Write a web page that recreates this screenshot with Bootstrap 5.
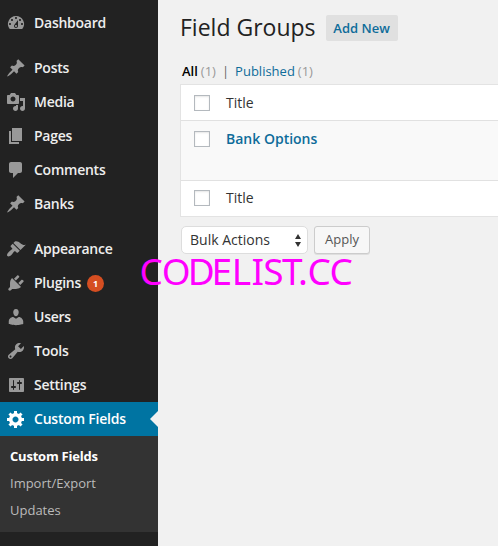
<!DOCTYPE html>
<html lang="en">
<head>
<meta charset="utf-8">
<meta name="viewport" content="width=device-width, initial-scale=1">
<title>Field Groups</title>
<link href="https://cdn.jsdelivr.net/npm/bootstrap@5.3.0/dist/css/bootstrap.min.css" rel="stylesheet">
<style>
body{font-family:"Open Sans",sans-serif;font-size:13px;line-height:18px;background:#f1f1f1;color:#333;height:546px}
a{text-decoration:none;color:#0e6c9a}
.side-menu{width:158px;background:#222;padding-top:6px}
.side-menu .nav-link{height:34px;padding:0 0 0 6px;gap:8px;color:#eee;font-size:14px;font-weight:600;letter-spacing:-.25px}
.side-menu svg{width:20px;height:20px;fill:#999;flex:none}
.menu-gap{margin-top:11px}
.side-menu .nav-link.active{background:#0074a2;color:#fff;letter-spacing:-.2px}
.nav-link.active svg{fill:#fff}
.nav-link.active::after{content:"";margin-left:auto;border:8px solid transparent;border-right-color:#f1f1f1;border-left:0}
.count-dot{width:17px;height:17px;background:#d54e21;font-size:9px;margin-left:-2px}
.sub-menu{background:#333;height:96px;padding:7px 10px}
.sub-menu a{height:27px;line-height:27px;color:#bbb}
.sub-menu a.current{color:#fff;font-weight:700;letter-spacing:-.22px}
.main-area{padding:11px 0 0 22px}
.page-title{font-size:23px;line-height:32px;font-weight:400;color:#222}
.add-new{height:26px;width:72px;background:#e0e0e0;border-radius:2px;font-weight:600;line-height:26px;margin-left:10px;margin-top:4px}
.views{margin:19px 0 0 2px;gap:3px;height:22px}
.views span{color:#999}
.views .sep{color:#666;margin:0 3px}
.groups{border:1px solid #e3e3e3;border-right:0;background:#fff;font-size:14px}
.g-row{height:35px;padding-left:13px;gap:16px}
.g-row.item{height:61px;background:#f9f9f9;border-top:1px solid #e1e1e1;border-bottom:1px solid #e1e1e1;padding-top:10px}
.g-row.foot{padding-bottom:2px}
.item a{margin-top:-1px}
.tick{appearance:none;width:16px;height:16px;margin:0;border:1px solid #b4b9be;background:#fff;box-shadow:inset 0 1px 2px rgba(0,0,0,.1)}
.action-bar{padding-top:9px;gap:6px}
.bulk{width:127px;height:28px;margin-left:1px;border:1px solid #ddd;border-radius:5px;background:#fff;font-size:14px;padding:0 6px 0 8px}
.apply{width:56px;height:28px;padding:0;border:1px solid #ccc;border-radius:3px;background:#f7f7f7;color:#555;font-size:13px;box-shadow:0 1px 0 rgba(0,0,0,.08)}
.stamp{left:138px;top:250px;font:37px "Noto Sans",sans-serif;fill:#f0f}
</style>
<script src="https://cdn.jsdelivr.net/npm/bootstrap@5.3.0/dist/js/bootstrap.bundle.min.js"></script>
</head>
<body class="d-flex position-relative overflow-hidden">
<svg class="d-none">
<symbol id="pin" viewBox="0 0 20 20"><path d="M10.44 3.02l1.82-1.82 6.36 6.35-1.83 1.82c-1.05-.68-2.48-.57-3.41.36l-.75.75c-.92.93-1.04 2.35-.35 3.41l-1.83 1.82-2.41-2.41-2.8 2.79c-.42.42-3.38 2.71-3.8 2.29s1.86-3.39 2.28-3.81l2.79-2.79L4.1 9.36l1.83-1.82c1.05.69 2.48.57 3.4-.36l.75-.75c.93-.92 1.05-2.35.36-3.41z"/></symbol>
</svg>
<aside class="side-menu flex-shrink-0">
<nav class="nav flex-column flex-nowrap">
<a href="#" class="nav-link d-flex align-items-center"><svg viewBox="0 0 20 20"><path d="M3.76 16h12.48A7.998 7.998 0 0 0 10 3a7.998 7.998 0 0 0-6.24 13zM10 4c.55 0 1 .45 1 1s-.45 1-1 1-1-.45-1-1 .45-1 1-1zM6 6c.55 0 1 .45 1 1s-.45 1-1 1-1-.45-1-1 .45-1 1-1zm8 0c.55 0 1 .45 1 1s-.45 1-1 1-1-.45-1-1 .45-1 1-1zm-5.37 5.55L12 7v6c0 1.1-.9 2-2 2s-2-.9-2-2c0-.57.24-1.08.63-1.45zM4 10c.55 0 1 .45 1 1s-.45 1-1 1-1-.45-1-1 .45-1 1-1zm12 0c.55 0 1 .45 1 1s-.45 1-1 1-1-.45-1-1 .45-1 1-1zm-5 3c0-.55-.45-1-1-1s-1 .45-1 1 .45 1 1 1 1-.45 1-1z"/></svg>Dashboard</a>
<a href="#" class="nav-link d-flex align-items-center menu-gap"><svg><use href="#pin"/></svg>Posts</a>
<a href="#" class="nav-link d-flex align-items-center"><svg viewBox="0 0 20 20"><path d="M13 11V4c0-.55-.45-1-1-1h-1.67L9 1H5L3.67 3H2c-.55 0-1 .45-1 1v7c0 .55.45 1 1 1h10c.55 0 1-.45 1-1zM7 4.5c1.38 0 2.5 1.12 2.5 2.5S8.38 9.5 7 9.5 4.5 8.38 4.5 7 5.62 4.5 7 4.5zM14 6h5v10.5c0 1.38-1.12 2.5-2.5 2.5S14 17.88 14 16.5s1.12-2.5 2.5-2.5c.17 0 .34.02.5.05V9h-3V6zm-4 8.05V13h2v3.5c0 1.38-1.12 2.5-2.5 2.5S7 17.88 7 16.5 8.12 14 9.5 14c.17 0 .34.02.5.05z"/></svg>Media</a>
<a href="#" class="nav-link d-flex align-items-center"><svg viewBox="0 0 20 20"><path d="M6 15V2h10v13H6zm-1 1h8v2H3V5h2v11z"/></svg>Pages</a>
<a href="#" class="nav-link d-flex align-items-center"><svg viewBox="0 0 20 20"><path d="M5 2h9c1.1 0 2 .9 2 2v7c0 1.1-.9 2-2 2h-2l-5 5v-5H5c-1.1 0-2-.9-2-2V4c0-1.1.9-2 2-2z"/></svg>Comments</a>
<a href="#" class="nav-link d-flex align-items-center"><svg><use href="#pin"/></svg>Banks</a>
<a href="#" class="nav-link d-flex align-items-center menu-gap"><svg viewBox="0 0 20 20"><path d="M14.48 11.06L7.41 3.99l1.5-1.5c.5-.56 2.3-.47 3.51.32 1.21.8 1.43 1.28 2.91 2.1 1.18.64 2.45 1.26 4.45.85zm-.71.71L6.7 4.7 4.93 6.47c-.39.39-.39 1.02 0 1.41l1.06 1.06c.39.39.39 1.03 0 1.42-.6.6-1.43 1.11-2.21 1.69-.35.26-.7.53-1.01.84C1.43 14.23.4 16.08 1.4 17.07c.99 1 2.84-.03 4.18-1.36.31-.31.58-.66.85-1.02.57-.78 1.08-1.61 1.69-2.21.39-.39 1.02-.39 1.41 0l1.06 1.06c.39.39 1.02.39 1.41 0z"/></svg>Appearance</a>
<a href="#" class="nav-link d-flex align-items-center"><svg viewBox="0 0 20 20"><path d="M13.11 4.36L9.87 7.6 8 5.73l3.24-3.24c.35-.34 1.05-.2 1.56.32.52.51.66 1.21.31 1.55zm-8 1.77l.91-1.12 9.01 9.01-1.19.84c-.71.71-2.63 1.16-3.82 1.16H6.14L4.9 17.26c-.59.59-1.54.59-2.12 0-.59-.58-.59-1.53 0-2.12l1.24-1.24v-3.88c0-1.13.4-3.19 1.09-3.89zm7.26 3.97l3.24-3.24c.34-.35 1.04-.21 1.55.31.52.51.66 1.21.31 1.55l-3.24 3.25z"/></svg>Plugins<span class="count-dot badge rounded-circle d-flex align-items-center justify-content-center p-0">1</span></a>
<a href="#" class="nav-link d-flex align-items-center"><svg viewBox="0 0 20 20"><path d="M10 9.25c-2.27 0-2.73-3.44-2.73-3.44C7 4.02 7.82 2 9.97 2c2.16 0 2.98 2.02 2.71 3.81 0 0-.41 3.44-2.68 3.44zm0 2.57L12.72 10c2.39 0 4.52 2.33 4.52 4.53v2.49s-3.65 1.13-7.24 1.13c-3.65 0-7.24-1.13-7.24-1.13v-2.49c0-2.25 1.94-4.48 4.47-4.48z"/></svg>Users</a>
<a href="#" class="nav-link d-flex align-items-center"><svg viewBox="0 0 20 20"><path d="M16.68 9.77c-1.34 1.34-3.3 1.67-4.95.99l-5.41 6.52c-.99.99-2.59.99-3.58 0s-.99-2.59 0-3.57l6.52-5.42c-.68-1.65-.35-3.61.99-4.95 1.28-1.28 3.12-1.62 4.72-1.06l-2.89 2.89 2.82 2.82 2.86-2.87c.53 1.58.18 3.39-1.08 4.65zM3.81 16.21c.4.39 1.04.39 1.43 0 .4-.4.4-1.04 0-1.43-.39-.4-1.03-.4-1.43 0-.39.39-.39 1.03 0 1.43z"/></svg>Tools</a>
<a href="#" class="nav-link d-flex align-items-center"><svg viewBox="0 0 20 20"><path d="M18 16V4c0-.55-.45-1-1-1H4c-.55 0-1 .45-1 1v12c0 .55.45 1 1 1h13c.55 0 1-.45 1-1zM8 11h1c.55 0 1 .45 1 1s-.45 1-1 1H8v1.5c0 .28-.22.5-.5.5s-.5-.22-.5-.5V13H6c-.55 0-1-.45-1-1s.45-1 1-1h1V5.5c0-.28.22-.5.5-.5s.5.22.5.5V11zm5-2h-1c-.55 0-1-.45-1-1s.45-1 1-1h1V5.5c0-.28.22-.5.5-.5s.5.22.5.5V7h1c.55 0 1 .45 1 1s-.45 1-1 1h-1v5.5c0 .28-.22.5-.5.5s-.5-.22-.5-.5V9z"/></svg>Settings</a>
<a href="#" class="nav-link active d-flex align-items-center"><svg viewBox="0 0 20 20"><path d="M18 12h-2.18c-.17.7-.44 1.35-.81 1.93l1.54 1.54-2.1 2.1-1.54-1.54c-.58.36-1.23.63-1.91.79V19H8v-2.18c-.68-.16-1.33-.43-1.91-.79l-1.54 1.54-2.12-2.12 1.54-1.54c-.36-.58-.63-1.23-.79-1.91H1V9.03h2.17c.16-.7.44-1.35.8-1.94L2.43 5.55l2.1-2.1 1.54 1.54c.58-.37 1.24-.64 1.93-.81V2h3v2.18c.68.16 1.33.43 1.91.79l1.54-1.54 2.12 2.12-1.54 1.54c.36.59.64 1.24.8 1.94H18V12zm-8.5 1.5c1.66 0 3-1.34 3-3s-1.34-3-3-3-3 1.34-3 3 1.34 3 3 3z"/></svg>Custom Fields</a>
</nav>
<div class="sub-menu d-flex flex-column">
<a href="#" class="current">Custom Fields</a>
<a href="#">Import/Export</a>
<a href="#">Updates</a>
</div>
</aside>
<main class="main-area flex-grow-1">
<div class="d-flex align-items-start"><h1 class="page-title m-0">Field Groups</h1><a href="#" class="add-new text-center">Add New</a></div>
<div class="views d-flex"><b class="fw-semibold text-black">All</b><span>(1)</span><span class="sep">|</span><a href="#">Published</a><span>(1)</span></div>
<div class="groups">
<div class="g-row d-flex align-items-center"><input type="checkbox" class="tick" aria-label="Select all">Title</div>
<div class="g-row item d-flex align-items-start"><input type="checkbox" class="tick" aria-label="Select Bank Options"><a href="#" class="fw-semibold">Bank Options</a></div>
<div class="g-row foot d-flex align-items-center"><input type="checkbox" class="tick" aria-label="Select all">Title</div>
</div>
<div class="d-flex action-bar">
<div class="bulk d-flex align-items-center justify-content-between" role="button">Bulk Actions<svg width="6" height="13" viewBox="0 0 6 13" fill="#333"><path d="M3 0l3 5H0zM3 13l3-5H0z"/></svg></div>
<button class="btn apply">Apply</button>
</div>
</main>
<svg class="stamp position-absolute" width="220" height="44"><text y="35" x="1.5 23.7 49.7 73.5 93.7 113.5 125.2 144 160 169.5 191.5">CODELIST.CC</text></svg>
</body>
</html>
